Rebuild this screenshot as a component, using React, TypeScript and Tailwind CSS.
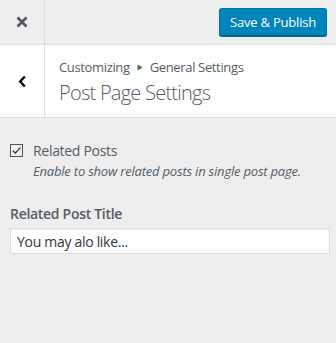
import React from "react";

export default function App() {
  const font = { fontFamily: '"Open Sans", "Noto Sans", sans-serif' };
  return (
    <div className="w-[336px] h-[343px] bg-[#eeeeee] overflow-hidden" style={font}>
      <div className="flex h-[45px] border-b border-[#dddddd]">
        <div className="w-[45px] border-r border-[#dddddd] flex items-center justify-center">
          <svg width="12" height="12" viewBox="0 0 12 12">
            <path d="M1.5 1.5 L10.5 10.5 M10.5 1.5 L1.5 10.5" stroke="#50575e" strokeWidth="2.6" strokeLinecap="butt" />
          </svg>
        </div>
        <div className="flex-1 flex items-start justify-end pr-[9px] pt-[8px]">
          <button className="h-[28px] w-[108px] rounded-[3px] bg-[#0085ba] border border-[#0073aa] border-b-[#006799] text-white text-[13px] leading-none tracking-[-0.2px] shadow-[0_1px_0_#006799]">
            Save &amp; Publish
          </button>
        </div>
      </div>
      <div className="flex h-[73px] bg-white border-b border-[#dddddd]">
        <div className="w-[45px] border-r border-[#dddddd] flex items-center justify-center">
          <svg width="9" height="13" viewBox="0 0 9 13">
            <path d="M6.8 1.5 L2.2 6.5 L6.8 11.5" stroke="#000" strokeWidth="2.4" fill="none" />
          </svg>
        </div>
        <div className="flex-1 pl-[14px] pt-[13px] text-[#555d66]">
          <div className="text-[13px] leading-[18px] tracking-[-0.35px] flex items-center">
            <span>Customizing</span>
            <svg width="6" height="7" viewBox="0 0 6 7" className="mx-[7px]">
              <path d="M0.5 0.5 L5.5 3.5 L0.5 6.5 Z" fill="#555d66" />
            </svg>
            <span>General Settings</span>
          </div>
          <div className="text-[20px] font-light leading-[28px] mt-[3px] tracking-[-0.75px]">Post Page Settings</div>
        </div>
      </div>
      <div className="px-[10px] pt-[24px]">
        <div className="flex items-start">
          <div className="w-[13px] h-[13px] border border-[#555] mt-[2px] flex items-center justify-center bg-transparent">
            <svg width="11" height="11" viewBox="0 0 11 11">
              <path d="M1.8 5.6 L4.3 8.1 L9.4 2.6" stroke="#333" strokeWidth="1.3" fill="none" />
            </svg>
          </div>
          <div className="ml-[10px]">
            <div className="text-[14px] leading-[18px] text-[#555d66] tracking-[-0.3px]">Related Posts</div>
            <div className="text-[13px] leading-[18px] italic text-[#555d66] mt-[2px] tracking-[-0.2px]">
              Enable to show related posts in single post page.
            </div>
          </div>
        </div>
        <div className="mt-[24px] text-[14px] font-semibold leading-[20px] text-[#555d66] tracking-[-0.3px]">Related Post Title</div>
        <div className="mt-[4px] w-[320px] h-[26px] bg-white border border-[#dddddd] shadow-[inset_0_1px_2px_rgba(0,0,0,0.07)] flex items-center pl-[6px] text-[14px] text-[#32373c] tracking-[-0.3px]">
          You may alo like...
        </div>
      </div>
    </div>
  );
}
